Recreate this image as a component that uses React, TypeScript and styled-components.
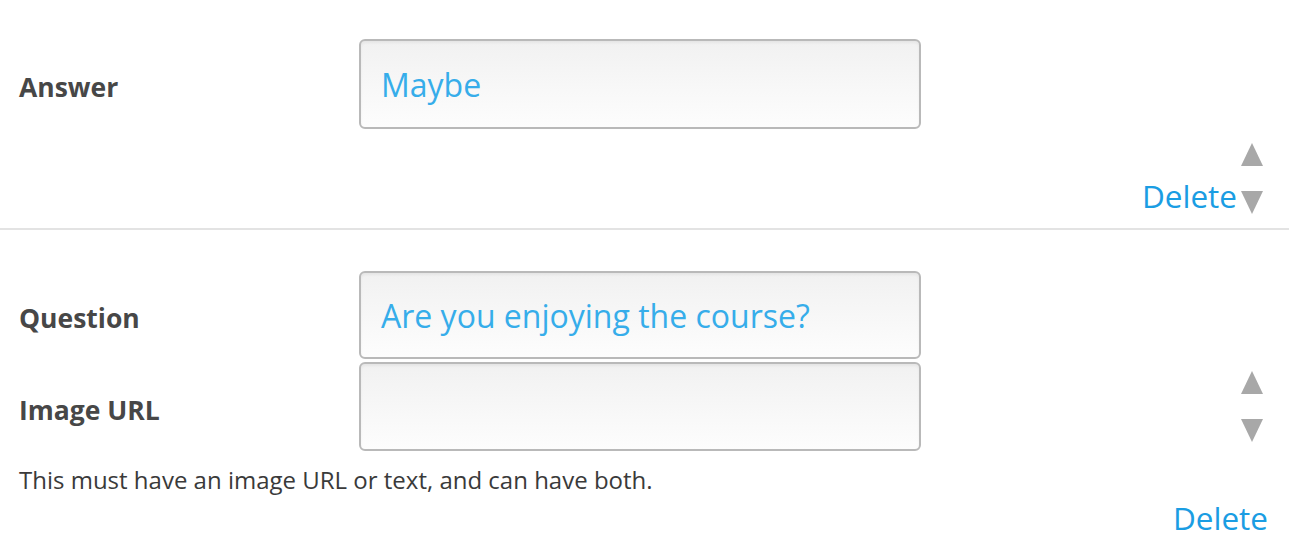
import styled, { createGlobalStyle } from 'styled-components';

const GlobalStyle = createGlobalStyle`
  body {
    margin: 0;
    background: #fff;
    font-family: "Open Sans", "Liberation Sans", sans-serif;
  }
`;

const Page = styled.div`
  width: 1289px;
`;

interface SectionProps {
  divided?: boolean;
  top: number;
  bottom: number;
}

const Section = styled.section<SectionProps>`
  padding: ${(props) => props.top}px 26px ${(props) => props.bottom}px 19px;
  border-bottom: ${(props) => (props.divided ? '2px solid #e3e3e3' : 'none')};
`;

interface FieldRowProps {
  gap?: number;
}

const FieldRow = styled.div<FieldRowProps>`
  display: flex;
  align-items: center;
  margin-top: ${(props) => props.gap || 0}px;
`;

const Label = styled.label`
  width: 340px;
  flex-shrink: 0;
  padding-top: 7px;
  font-size: 26.5px;
  font-weight: 700;
  color: #474747;
  line-height: 1;
`;

interface FieldProps {
  tall?: number;
}

const Field = styled.input<FieldProps>`
  box-sizing: border-box;
  width: 562px;
  height: ${(props) => props.tall || 89}px;
  padding: 0 20px;
  border: 2px solid #b9b9b9;
  border-radius: 6px;
  background: linear-gradient(#f1f1f1, #fdfdfd);
  box-shadow: inset 0 2px 3px rgba(0, 0, 0, 0.05);
  font-family: "Open Sans", "Liberation Sans", sans-serif;
  font-size: 32px;
  color: #36adea;
  outline: none;
`;

const Controls = styled.div`
  display: flex;
  justify-content: flex-end;
  align-items: flex-end;
  margin-top: 14px;
`;

const DeleteLink = styled.a`
  font-size: 31.5px;
  line-height: 31px;
  color: #1a9de3;
  text-decoration: none;
  cursor: pointer;
`;

const InlineDelete = styled(DeleteLink)`
  margin: 0 4px 3px 0;
`;

const Arrows = styled.div`
  display: flex;
  flex-direction: column;
  gap: 25px;
  margin-left: auto;
  align-self: center;

  svg {
    display: block;
    width: 22px;
    height: 23px;
    fill: #a8a8a8;
  }
`;

const ControlArrows = styled(Arrows)`
  margin-left: 0;
  align-self: flex-end;
`;

const Hint = styled.p`
  margin: 14px 0 0;
  font-size: 24px;
  line-height: 30px;
  color: #3a3a3a;
`;

const DeleteRow = styled.div`
  display: flex;
  justify-content: flex-end;
  margin: 7px -5px 0 0;
`;

const UpArrow = () => (
  <svg viewBox="0 0 22 23">
    <polygon points="11,0 22,23 0,23" />
  </svg>
);

const DownArrow = () => (
  <svg viewBox="0 0 22 23">
    <polygon points="0,0 22,0 11,23" />
  </svg>
);

const App = () => {
  return (
    <Page>
      <GlobalStyle />
      <Section divided top={39} bottom={14}>
        <FieldRow>
          <Label>Answer</Label>
          <Field tall={90} defaultValue="Maybe" />
        </FieldRow>
        <Controls>
          <InlineDelete>Delete</InlineDelete>
          <ControlArrows>
            <UpArrow />
            <DownArrow />
          </ControlArrows>
        </Controls>
      </Section>
      <Section top={41} bottom={0}>
        <FieldRow>
          <Label>Question</Label>
          <Field tall={88} defaultValue="Are you enjoying the course?" />
        </FieldRow>
        <FieldRow gap={3}>
          <Label>Image URL</Label>
          <Field />
          <Arrows>
            <UpArrow />
            <DownArrow />
          </Arrows>
        </FieldRow>
        <Hint>This must have an image URL or text, and can have both.</Hint>
        <DeleteRow>
          <DeleteLink>Delete</DeleteLink>
        </DeleteRow>
      </Section>
    </Page>
  );
};

export default App;
